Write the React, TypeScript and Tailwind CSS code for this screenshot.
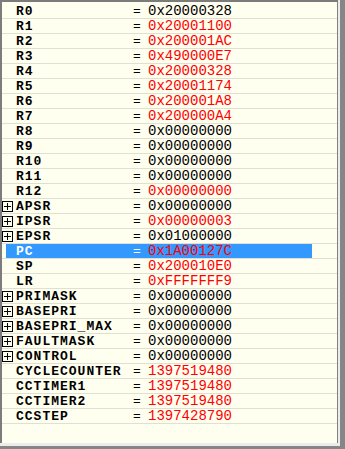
import React from 'react';

type Reg = { name: string; value: string; changed?: boolean; expandable?: boolean; selected?: boolean };

const regs: Reg[] = [
    { name: 'R0', value: '0x20000328' },
    { name: 'R1', value: '0x20001100', changed: true },
    { name: 'R2', value: '0x200001AC', changed: true },
    { name: 'R3', value: '0x490000E7', changed: true },
    { name: 'R4', value: '0x20000328', changed: true },
    { name: 'R5', value: '0x20001174', changed: true },
    { name: 'R6', value: '0x200001A8', changed: true },
    { name: 'R7', value: '0x200000A4', changed: true },
    { name: 'R8', value: '0x00000000' },
    { name: 'R9', value: '0x00000000' },
    { name: 'R10', value: '0x00000000' },
    { name: 'R11', value: '0x00000000' },
    { name: 'R12', value: '0x00000000', changed: true },
    { name: 'APSR', value: '0x00000000', expandable: true },
    { name: 'IPSR', value: '0x00000003', changed: true, expandable: true },
    { name: 'EPSR', value: '0x01000000', expandable: true },
    { name: 'PC', value: '0x1A00127C', changed: true, selected: true },
    { name: 'SP', value: '0x200010E0', changed: true },
    { name: 'LR', value: '0xFFFFFFF9', changed: true },
    { name: 'PRIMASK', value: '0x00000000', expandable: true },
    { name: 'BASEPRI', value: '0x00000000', expandable: true },
    { name: 'BASEPRI_MAX', value: '0x00000000', expandable: true },
    { name: 'FAULTMASK', value: '0x00000000', expandable: true },
    { name: 'CONTROL', value: '0x00000000', expandable: true },
    { name: 'CYCLECOUNTER', value: '1397519480', changed: true },
    { name: 'CCTIMER1', value: '1397519480', changed: true },
    { name: 'CCTIMER2', value: '1397519480', changed: true },
    { name: 'CCSTEP', value: '1397428790', changed: true },
];

const mono = { fontFamily: '"Liberation Mono", "DejaVu Sans Mono", monospace' };

// tree expander drawn over the left edge of the row
const PlusBox = () => (
    <svg width="11" height="11" viewBox="0 0 11 11" className="absolute left-0 top-[2px]">
        <rect x="0.5" y="0.5" width="10" height="10" fill="#fffff0" stroke="#000" />
        <path d="M2 5.5h7M5.5 2v7" stroke="#000" />
    </svg>
);

const RegRow: React.FC<{ reg: Reg }> = ({ reg }) => (
    <div className="h-[15px] border-b border-[#e0dfd2] flex items-center relative">
        <div
            className={`h-full flex items-center w-[306px] ml-[4px] pl-[10px] ${reg.selected ? 'bg-[#3399ff]' : ''}`}
        >
            <span
                className={`w-[117px] font-bold text-[13px] tracking-[1px] leading-none ${reg.selected ? 'text-white' : 'text-black'}`}
                style={mono}
            >
                {reg.name}
            </span>
            <span className={`w-[15px] text-[13px] leading-none ${reg.selected ? 'text-white' : 'text-black'}`} style={mono}>
                =
            </span>
            <span className={`text-[14px] leading-none ${reg.changed ? 'text-[#ff0000]' : 'text-black'}`} style={mono}>
                {reg.value}
            </span>
        </div>
        {reg.expandable && <PlusBox />}
    </div>
);

export default function App() {
    return (
        <div className="w-[345px] h-[449px] bg-[#868686] overflow-hidden">
            <div className="w-[340px] h-[446px] bg-[#ececec]">
                <div className="w-[338px] h-[443px] bg-[#fffff0] border-t-2 border-l-2 border-[#7c7c7c] border-r border-r-[#808080] pt-[2px]">
                    {regs.map((r) => (
                        <RegRow key={r.name} reg={r} />
                    ))}
                </div>
            </div>
        </div>
    );
}
